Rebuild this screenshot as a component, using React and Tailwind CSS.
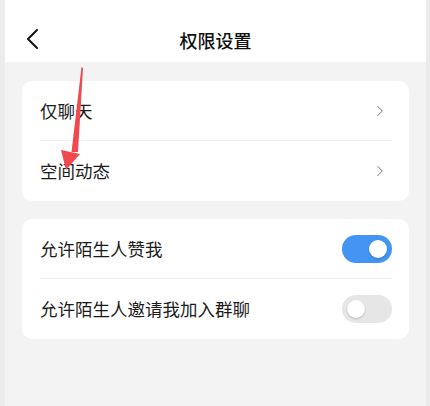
import { ChevronRight } from "lucide-react";

const font = { fontFamily: '"Noto Sans CJK SC", "Noto Sans", sans-serif' };

function Toggle({ on }) {
  return (
    <div
      className={
        on
          ? "flex h-[28px] w-[50px] items-center justify-end rounded-full bg-[#4494f4] pr-[5px]"
          : "flex h-[28px] w-[50px] items-center justify-start rounded-full bg-[#e6e6e6] pl-[5px]"
      }
    >
      <div className="h-[18px] w-[18px] rounded-full bg-white shadow-[0_1px_2px_rgba(0,0,0,0.2)]" />
    </div>
  );
}

function LinkRow({ label, divider }) {
  return (
    <div className="relative flex h-[60px] items-center justify-between pl-[18px] pr-[20px]">
      <span className="text-[17.5px] text-[#1b1b1b]">{label}</span>
      <ChevronRight className="h-[18px] w-[18px] text-[#8a8a8a]" strokeWidth={1.4} />
      {divider && (
        <div className="absolute bottom-0 left-[18px] right-[17px] h-px bg-[#f0f0f0]" />
      )}
    </div>
  );
}

function SwitchRow({ label, on, divider }) {
  return (
    <div className="relative flex h-[60px] items-center justify-between pl-[18px] pr-[17px]">
      <span className="text-[17.5px] text-[#1b1b1b]">{label}</span>
      <Toggle on={on} />
      {divider && (
        <div className="absolute bottom-0 left-[18px] right-[17px] h-px bg-[#f0f0f0]" />
      )}
    </div>
  );
}

export default function App() {
  return (
    <div className="relative flex h-[406px] w-[430px] overflow-hidden bg-[#ececec]" style={font}>
      <div className="ml-[5px] flex w-[421px] flex-col bg-[#f3f3f3]">
        <div className="relative flex h-[62px] items-center justify-center bg-white pt-[18px]">
          <svg className="absolute left-[18px] top-[28px]" width="20" height="22" viewBox="0 0 20 22">
            <polyline
              points="14,2 5,11 14,20"
              fill="none"
              stroke="#111"
              strokeWidth="2"
              strokeLinecap="round"
              strokeLinejoin="round"
            />
          </svg>
          <span className="text-[18px] font-medium text-[#111]">权限设置</span>
        </div>

        <div className="flex flex-col gap-[18px] px-[17px] pt-[19px]">
          <div className="rounded-[10px] bg-white">
            <LinkRow label="仅聊天" divider />
            <LinkRow label="空间动态" />
          </div>
          <div className="rounded-[10px] bg-white">
            <SwitchRow label="允许陌生人赞我" on divider />
            <SwitchRow label="允许陌生人邀请我加入群聊" />
          </div>
        </div>
      </div>

      <svg className="absolute left-0 top-0" width="430" height="406" viewBox="0 0 430 406">
        <polygon points="81.5,67 83,68 78,152 71.5,152" fill="#ee4a4f" />
        <polygon points="61,150 80,154 66,170" fill="#ee4a4f" />
      </svg>
    </div>
  );
}
